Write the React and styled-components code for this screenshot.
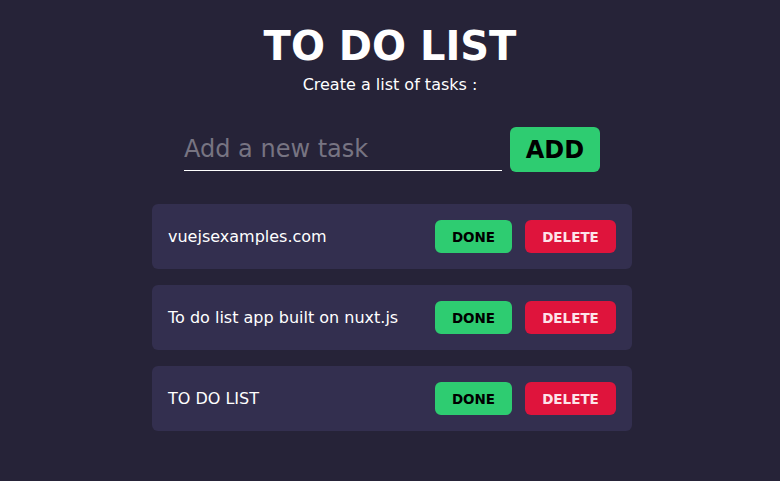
import React from 'react';
import styled, {createGlobalStyle} from 'styled-components';

const tasks = [
  'vuejsexamples.com',
  'To do list app built on nuxt.js',
  'TO DO LIST',
];

const App = () => (
  <>
    <GlobalStyle />
    <Page>
      <Title>TO DO LIST</Title>
      <Subtitle>Create a list of tasks :</Subtitle>
      <Form>
        <Input placeholder="Add a new task" />
        <AddButton>ADD</AddButton>
      </Form>
      <List>
        {tasks.map((task, i) => (
          <Task key={i}>
            <TaskText>{task}</TaskText>
            <Actions>
              <ActionButton done>DONE</ActionButton>
              <ActionButton>DELETE</ActionButton>
            </Actions>
          </Task>
        ))}
      </List>
    </Page>
  </>
);

const GlobalStyle = createGlobalStyle`
  html, body {
    margin: 0;
    background: #262338;
    font-family: "DejaVu Sans", Verdana, sans-serif;
  }
`;

const Page = styled.main`
  display: flex;
  flex-direction: column;
  align-items: center;
  min-height: 481px;
  color: #fff;
`;

const Title = styled.h1`
  margin: 22px 0 0;
  font-size: 40px;
  line-height: 48px;
  font-weight: bold;
`;

const Subtitle = styled.p`
  margin: 5px 0 0;
  font-size: 16px;
  line-height: 20px;
`;

const Form = styled.div`
  display: flex;
  align-items: flex-end;
  gap: 8px;
  margin-top: 32px;
  margin-left: 4px;
`;

const Input = styled.input`
  width: 318px;
  height: 43px;
  padding: 0;
  border: none;
  border-bottom: 1px solid #fff;
  background: transparent;
  color: #fff;
  font-family: inherit;
  font-size: 24px;
  outline: none;

  &::placeholder {
    color: #777482;
  }
`;

const AddButton = styled.button`
  width: 90px;
  height: 45px;
  margin-bottom: -1px;
  border: none;
  border-radius: 6px;
  background: #2ecc71;
  color: #000;
  font-family: inherit;
  font-size: 24px;
  font-weight: bold;
`;

const List = styled.ul`
  display: flex;
  flex-direction: column;
  gap: 16px;
  width: 480px;
  margin: 33px 0 0 4px;
  padding: 0;
  list-style: none;
`;

const Task = styled.li`
  display: flex;
  align-items: center;
  justify-content: space-between;
  height: 65px;
  padding: 0 16px;
  box-sizing: border-box;
  border-radius: 6px;
  background: #332f4f;
`;

const TaskText = styled.span`
  font-size: 16px;
`;

const Actions = styled.div`
  display: flex;
  gap: 13px;
`;

const ActionButton = styled.button`
  height: 33px;
  padding: 0;
  width: ${p => (p.done ? '77px' : '91px')};
  border: none;
  border-radius: 6px;
  background: ${p => (p.done ? '#2ecc71' : '#df143c')};
  color: ${p => (p.done ? '#000' : '#fde4ea')};
  font-family: inherit;
  font-size: 13.5px;
  font-weight: bold;
`;

export default App;
